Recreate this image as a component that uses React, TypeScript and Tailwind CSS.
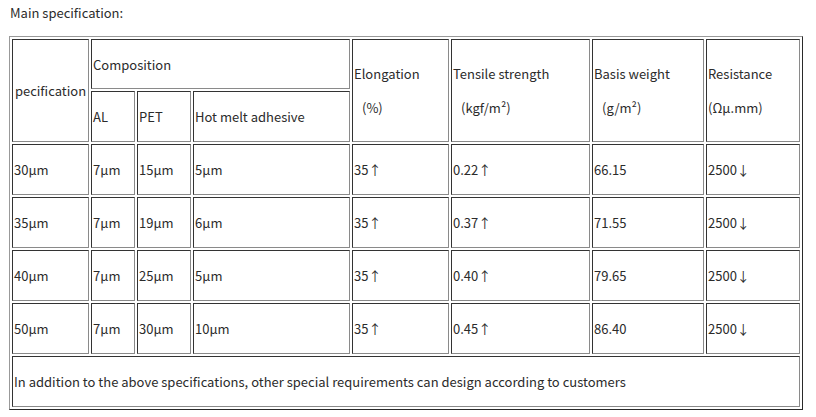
import React from "react";

const rows = [
  ["30μm", "7μm", "15μm", "5μm", "35↑", "0.22↑", "66.15", "2500↓"],
  ["35μm", "7μm", "19μm", "6μm", "35↑", "0.37↑", "71.55", "2500↓"],
  ["40μm", "7μm", "25μm", "5μm", "35↑", "0.40↑", "79.65", "2500↓"],
  ["50μm", "7μm", "30μm", "10μm", "35↑", "0.45↑", "86.40", "2500↓"],
];

const cell =
  "border border-t-[#333] border-l-[#333] border-b-[#8a8a8a] border-r-[#8a8a8a] px-px align-middle";

export default function App() {
  return (
    <div className="min-h-[417px] bg-white pl-[9px] pt-[3px] text-[13px] leading-[20px] text-[#2b2b2b] font-['Noto_Sans_CJK_SC','Noto_Sans',sans-serif]">
      <p className="pl-px">Main specification:</p>

      <table className="mt-[13px] w-[794px] table-fixed border-separate border-spacing-[2px] border border-t-[#999] border-l-[#999] border-b-[#2a2a2a] border-r-[#2a2a2a] leading-[17px]">
        <colgroup>
          <col className="w-[77px]" />
          <col className="w-[44px]" />
          <col className="w-[54px]" />
          <col className="w-[157px]" />
          <col className="w-[97px]" />
          <col className="w-[139px]" />
          <col className="w-[112px]" />
          <col className="w-[94px]" />
        </colgroup>
        <tbody>
          <tr className="h-[50px]">
            <td rowSpan={2} className={`${cell} text-center`}>
              pecification
            </td>
            <td colSpan={3} className={cell}>
              Composition
            </td>
            <td rowSpan={2} className={cell}>
              <div>Elongation</div>
              <div className="h-[17px]"></div>
              <div className="pl-2">(%)</div>
            </td>
            <td rowSpan={2} className={cell}>
              <div>Tensile strength</div>
              <div className="h-[17px]"></div>
              <div className="pl-2">(kgf/m²)</div>
            </td>
            <td rowSpan={2} className={cell}>
              <div>Basis weight</div>
              <div className="h-[17px]"></div>
              <div className="pl-2">(g/m²)</div>
            </td>
            <td rowSpan={2} className={cell}>
              <div>Resistance</div>
              <div className="h-[17px]"></div>
              <div>(Ωμ.mm)</div>
            </td>
          </tr>
          <tr className="h-[51px]">
            <td className={cell}>AL</td>
            <td className={cell}>PET</td>
            <td className={cell}>Hot melt adhesive</td>
          </tr>

          {rows.map((r, i) => (
            <tr key={i} className="h-[51px]">
              {r.map((v, j) => (
                <td key={j} className={cell}>
                  {v}
                </td>
              ))}
            </tr>
          ))}

          <tr className="h-[51px]">
            <td colSpan={8} className={cell}>
              In addition to the above specifications, other special requirements can design according to customers
            </td>
          </tr>
        </tbody>
      </table>
    </div>
  );
}
